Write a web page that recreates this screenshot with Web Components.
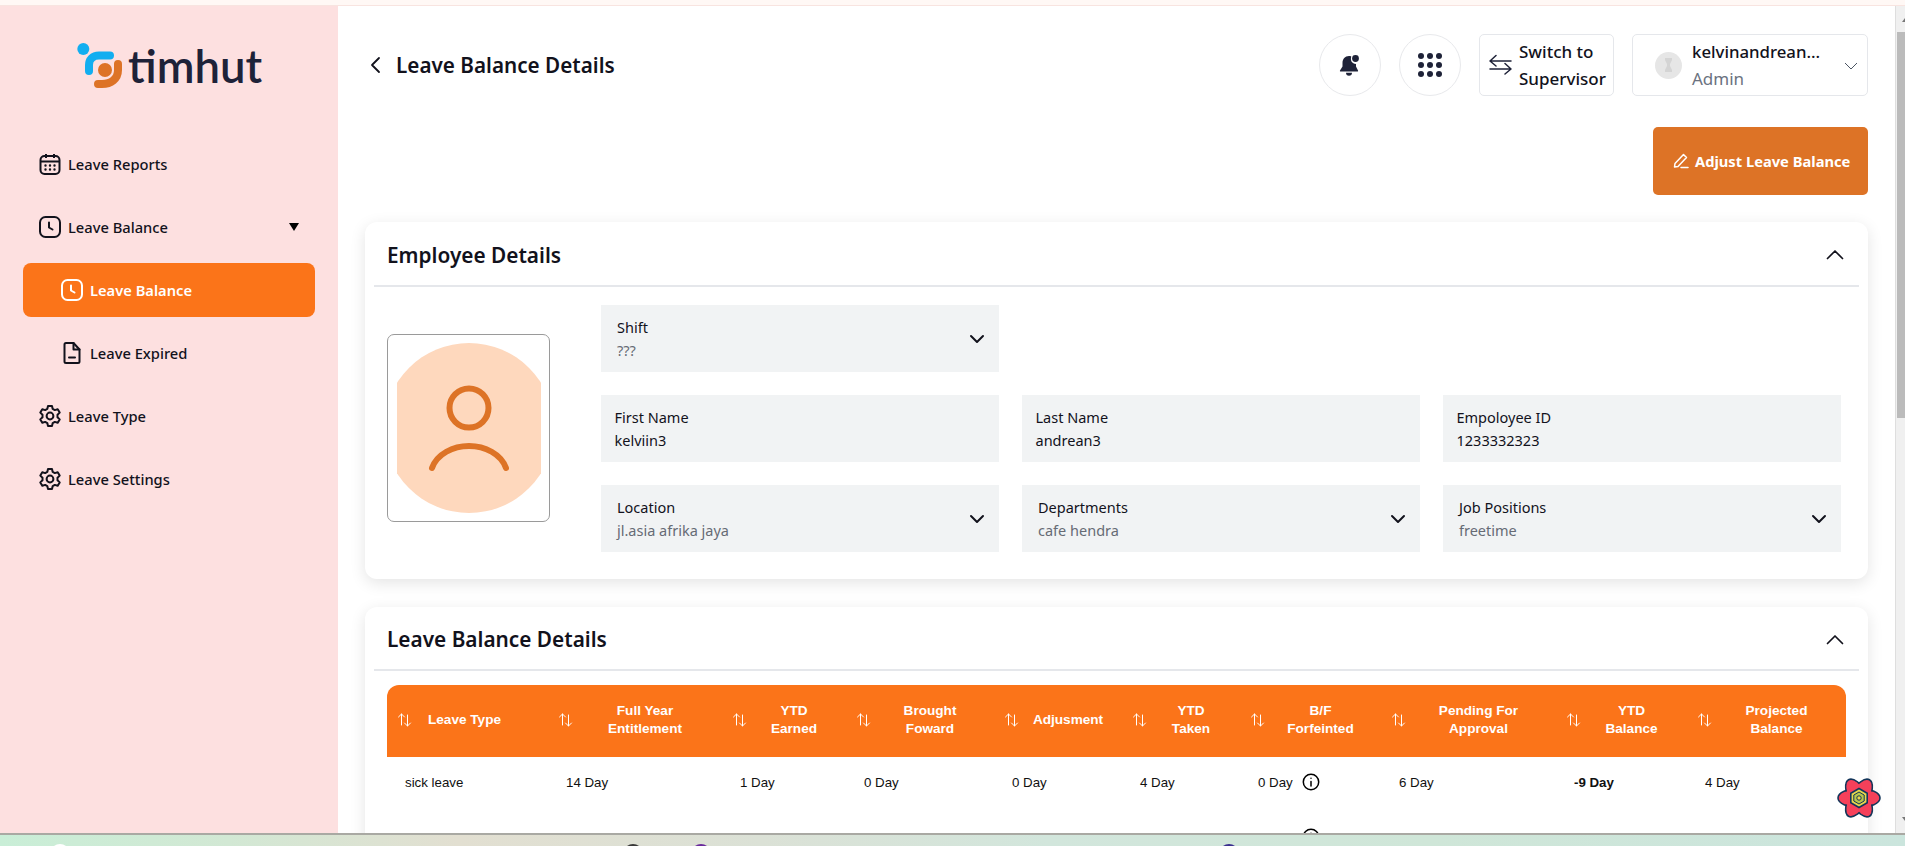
<!DOCTYPE html>
<html><head><meta charset="utf-8"><title>Leave Balance Details</title>
<style>
html,body{margin:0;padding:0;height:846px;overflow:hidden;background:#fff;font-family:"Noto Sans",sans-serif}
</style></head><body>
<app-shell>
  <side-bar slot="side">
    <nav-item icon="calendar">Leave Reports</nav-item>
    <nav-item icon="clock" caret>Leave Balance</nav-item>
    <nav-item icon="clock" sub active>Leave Balance</nav-item>
    <nav-item icon="file" sub>Leave Expired</nav-item>
    <nav-item icon="gear">Leave Type</nav-item>
    <nav-item icon="gear">Leave Settings</nav-item>
  </side-bar>
  <top-bar></top-bar>
  <adjust-row></adjust-row>
  <info-card heading="Employee Details"><employee-details></employee-details></info-card>
  <info-card heading="Leave Balance Details" second><leave-table></leave-table></info-card>
</app-shell>
<script>
const I={
calendar:'<rect x="2.500" y="4" width="19" height="18" rx="4"/><path d="M2.500 9.500h19M8 2v4M16 2v4"/><g stroke-width="2.400" stroke-linecap="round"><path d="M7.500 13.500h.01M12 13.500h.01M16.500 13.500h.01M7.500 17.500h.01M12 17.500h.01M16.500 17.500h.01"/></g>',
clock:'<rect x="2" y="2" width="20" height="20" rx="5.500"/><path d="M11 7.500V12.500l3.500 2" stroke-linecap="round" stroke-linejoin="round"/>',
file:'<path d="M4.500 3.500A1.500 1.500 0 0 1 6 2h7.500l6 6.500v12a1.500 1.500 0 0 1-1.500 1.500H6a1.500 1.500 0 0 1-1.500-1.500z" stroke-linejoin="round"/><path d="M13.500 2v6.500h6M9 16.500h6" stroke-linejoin="round" stroke-linecap="round"/>',
gear:'<circle cx="12" cy="12" r="3.400"/><path d="M10 2h4l.7 2.900 2.100 1.200 2.900-.9 2 3.400-2.200 2.100v2.600l2.200 2.100-2 3.400-2.900-.9-2.100 1.200L14 22h-4l-.7-2.900-2.100-1.200-2.900.9-2-3.400 2.200-2.100v-2.600L2.300 8.600l2-3.400 2.900.9 2.100-1.200z" stroke-linejoin="round"/>'
};
function def(name,css,html){
  customElements.define(name,class extends HTMLElement{
    connectedCallback(){
      if(this.shadowRoot)return;
      const r=this.attachShadow({mode:'open'});
      r.innerHTML='<style>'+css+'</style>'+(typeof html==='function'?html(this):html);
    }
  });
}
def('app-shell',`
:host{display:flex;flex-direction:column;width:1905px;height:846px;overflow:hidden;position:relative;background:#fff}
.strip{height:5px;background:#fff8f5;border-bottom:1px solid #f8e4e0;flex:none}
.mid{flex:1;display:flex;min-height:0}
main{flex:1;min-width:0;overflow:hidden;padding:28px 27px 0 27px;display:flex;flex-direction:column}
.bar{width:10px;box-sizing:border-box;flex:none;background:#f0f0f0;position:relative;border-left:1px solid #dedede}
.thumb{position:absolute;left:1px;right:0;top:26px;height:386px;background:#bbb}
.up,.dn{position:absolute;right:0;width:0;height:0;border-right:3px solid #777}
.up{top:12px;border-top:4px solid transparent;border-bottom:0}
.dn{top:811px;border-right:3px solid #777;border-bottom:4px solid transparent}
.task{height:11px;flex:none;border-top:2px solid #a9a9a3;position:relative;overflow:hidden;
background:linear-gradient(90deg,#c9eed7 0%,#d2e8d4 12%,#e2dfd1 24%,#dbe1d6 40%,#d2e6dc 55%,#cfe6d8 75%,#cbe5dd 100%)}
.task i{position:absolute;top:9px;width:20px;height:20px;border-radius:50%}
.react{position:absolute;left:1836px;top:775px;width:46px;height:46px}
`,`<div class="strip"></div>
<div class="mid"><slot name="side"></slot><main><slot></slot></main><div class="bar"><span class="up"></span><div class="thumb"></div><span class="dn"></span></div></div>
<div class="task"><i style="left:50px;background:#fff"></i><i style="left:623px;background:#3a3a3a"></i><i style="left:691px;background:#6a2a9c"></i><i style="left:1219px;background:#3b2f8f"></i></div>
<svg class="react" viewBox="-23 -23 46 46">
<g fill="#f5405a" stroke="#14365a" stroke-width="1.600"><ellipse rx="21" ry="9.500"/><ellipse rx="21" ry="9.500" transform="rotate(60)"/><ellipse rx="21" ry="9.500" transform="rotate(120)"/></g>
<g fill="#f5405a"><ellipse rx="19.500" ry="8.500" transform="rotate(60)"/><ellipse rx="19.500" ry="8.500"/></g>
<polygon points="0,-9.500 8.200,-4.750 8.200,4.750 0,9.500 -8.200,4.750 -8.200,-4.750" fill="#e9d84a" stroke="#14365a" stroke-width="1.600"/>
<polygon points="0,-6 5.200,-3 5.200,3 0,6 -5.200,3 -5.200,-3" fill="#b9c64a" stroke="#14365a" stroke-width="1"/>
<circle r="2.200" fill="#e9d84a" stroke="#14365a" stroke-width="1"/></svg>`);
def('side-bar',`
:host{display:flex;flex-direction:column;width:338px;flex:none;background:#fde0e0;box-sizing:border-box}
.logo{height:130.500px;display:flex;align-items:flex-start;padding:37px 0 0 77px;box-sizing:border-box;gap:5px}
.logo svg{flex:none}
.logo span{font:600 45.500px/46px Lato,sans-serif;color:#1e2238;margin-top:0}
nav{display:flex;flex-direction:column;gap:9px;padding:0 23px 0 23px}
`,`<div class="logo">
<svg width="46" height="46" viewBox="0 0 46 46" fill="none"><circle cx="6.300" cy="6" r="6" fill="#12aef0"/>
<path d="M33 12.500H22C15.500 12.500 12 17 12 22V28" stroke="#12aef0" stroke-width="8" stroke-linecap="round"/>
<circle cx="28" cy="27" r="7" fill="#dd7326"/>
<path d="M41 21V27C41 36 34 41 25 41H21" stroke="#dd7326" stroke-width="8" stroke-linecap="round"/></svg>
<span>timhut</span></div><nav><slot></slot></nav>`);
def('nav-item',`
:host{display:flex;align-items:center;height:54px;border-radius:8px;color:#12121c;font:500 14.700px "Noto Sans",sans-serif;padding-left:15px;position:relative}
:host([sub]){padding-left:37px}
:host([active]){background:#fb7419;color:#fff;font-weight:600}
svg{width:24px;height:24px;margin-right:6px;flex:none;fill:none;stroke:currentColor;stroke-width:2}
.caret{position:absolute;left:266px;top:23px;width:0;height:0;border-left:5.500px solid transparent;border-right:5.500px solid transparent;border-top:8px solid #000}
`,t=>`<svg viewBox="0 0 24 24">${I[t.getAttribute('icon')]}</svg><slot></slot>${t.hasAttribute('caret')?'<span class="caret"></span>':''}`);
def('top-bar',`
:host{display:flex;align-items:center;height:62px;flex:none;color:#12121c}
.back{width:12px;height:18px;margin:0 15px 0 4px;flex:none}
h1{font:600 20.700px "Noto Sans",sans-serif;margin:0;flex:1}
.right{display:flex;gap:18px;align-items:stretch;height:62px}
.circ{width:62px;height:62px;box-sizing:border-box;border:1px solid #e8e9ec;border-radius:50%;display:flex;align-items:center;justify-content:center}
.box{box-sizing:border-box;border:1px solid #e5e7eb;border-radius:5px;display:flex;align-items:center;font:500 17px/27px "Noto Sans",sans-serif}
.sw{width:135px;padding-left:9px;gap:7px}
.usr{width:236px;padding-left:22px;position:relative;font-size:16.800px}
.av{width:27px;height:27px;border-radius:50%;background:#e6e6e6;margin-right:10px;flex:none;display:flex;align-items:center;justify-content:center}
.usr small{display:block;font:400 17px/27px "Noto Sans",sans-serif;color:#6b7280}
.usr svg.c{position:absolute;right:9px;top:27px}
`,`<svg class="back" viewBox="0 0 12 18" fill="none" stroke="#12121c" stroke-width="1.800" stroke-linecap="round" stroke-linejoin="round"><path d="M10 2 3 9l7 7"/></svg>
<h1>Leave Balance Details</h1>
<div class="right">
<div class="circ"><svg width="22" height="22" viewBox="0 0 22 22" fill="#1e2238"><path d="M10 2C6 2 3.500 5 3.500 9v3.500L1 16.500c-.3.600 0 1 .7 1h16.600c.7 0 1-.4.700-1L17 12.500V10C13 9.500 11 6.500 12.300 2.400 11.600 2.100 10.800 2 10 2zM7 18.800a3 3 0 0 0 6 0z"/><circle cx="16.500" cy="4.500" r="3.400"/></svg></div>
<div class="circ"><svg width="24" height="24" viewBox="0 0 24 24" fill="#1e2238"><circle cx="3" cy="3" r="3"/><circle cx="12" cy="3" r="3"/><circle cx="21" cy="3" r="3"/><circle cx="3" cy="12" r="3"/><circle cx="12" cy="12" r="3"/><circle cx="21" cy="12" r="3"/><circle cx="3" cy="21" r="3"/><circle cx="12" cy="21" r="3"/><circle cx="21" cy="21" r="3"/></svg></div>
<div class="box sw"><svg width="23" height="22" viewBox="0 0 23 22" fill="none" stroke="#1e2238" stroke-width="1.500" stroke-linecap="round" stroke-linejoin="round"><path d="M1 7h21M7 1.500 1 7l6 5M22 15H1M16 9.500l6 5.500-6 5"/></svg><div>Switch to<br>Supervisor</div></div>
<div class="box usr"><div class="av"><svg width="9" height="16" viewBox="0 0 9 16" fill="#d4d4d4"><path d="M1 1h7v2L6 7v2l2 4v2H1v-2l2-4V7L1 3z"/></svg></div><div>kelvinandrean...<small>Admin</small></div>
<svg class="c" width="14" height="9" viewBox="0 0 14 9" fill="none" stroke="#4b5563" stroke-width="1"><path d="M1 1l6 6 6-6"/></svg></div>
</div>`);
def('adjust-row',`
:host{display:flex;justify-content:flex-end;margin:31px 0 27px;flex:none}
button{all:unset;box-sizing:border-box;width:215px;height:68px;background:#dd7326;border-radius:5px;color:#fff;font:700 14.700px "Noto Sans",sans-serif;display:flex;align-items:center;padding-left:20px;gap:6px;white-space:nowrap}
`,`<button><svg width="16" height="16" viewBox="0 0 16 16" fill="none" stroke="#fff" stroke-width="1.500" stroke-linecap="round" stroke-linejoin="round"><path d="M1.500 14 2 10.500 10.500 1.500l3 3L5 13.500zM8 14.500h7"/></svg>Adjust Leave Balance</button>`);
def('info-card',`
:host{display:block;flex:none;background:#fff;border-radius:12px;box-shadow:0 4px 16px rgba(0,0,0,.11);padding:0 9px 27px}
:host([second]){margin-top:28px}
.h{height:61px;padding:2px 13px 0;border-bottom:2px solid #e5e7eb;display:flex;align-items:center;justify-content:space-between}
h2{margin:0;font:600 20.800px "Noto Sans",sans-serif;color:#12121c}
svg{margin-right:2px}
:host([second]) .h{height:60px;padding-top:2px}
`,t=>`<div class="h"><h2>${t.getAttribute('heading')}</h2><svg width="18" height="11" viewBox="0 0 18 11" fill="none" stroke="#12121c" stroke-width="1.700" stroke-linecap="round" stroke-linejoin="round"><path d="M1.500 9.500 9 2l7.500 7.500"/></svg></div><slot></slot>`);
def('employee-details',`
:host{display:flex;padding:18px 18px 0 13px;align-items:center;gap:51px}
.ph{width:163px;height:188px;box-sizing:border-box;border:1px solid #9a9a9a;border-radius:7px;display:flex;align-items:center;justify-content:center;flex:none;margin-bottom:2px}
.g{display:grid;grid-template-columns:repeat(3,398px);grid-auto-rows:67px;gap:23px}
.sp{grid-column:span 2}
`,`<div class="ph"><svg width="144" height="170" viewBox="0 0 144 170" fill="none"><circle cx="72" cy="85" r="85" fill="#fed8bd"/><circle cx="72" cy="65" r="19.500" stroke="#dd7326" stroke-width="6"/><path d="M35 125C40 111 56 103 72 103s32 8 37 22" stroke="#dd7326" stroke-width="6" stroke-linecap="round"/></svg></div>
<div class="g">
<field-box select label="Shift" value="???"></field-box><div class="sp"></div>
<field-box label="First Name" value="kelviin3"></field-box><field-box label="Last Name" value="andrean3"></field-box><field-box label="Empoloyee ID" value="1233332323"></field-box>
<field-box select label="Location" value="jl.asia afrika jaya"></field-box><field-box select label="Departments" value="cafe hendra"></field-box><field-box select label="Job Positions" value="freetime"></field-box>
</div>`);
def('field-box',`
:host{display:flex;flex-direction:column;justify-content:center;background:#f1f3f4;padding:0 13.500px;box-sizing:border-box;position:relative;color:#12121c;font:400 14.500px/23px "Noto Sans",sans-serif}
:host([select]){padding-left:16px}
.v{font-size:14.500px}
:host([select]) .v{color:#666b75}
svg{position:absolute;right:14px;top:29px}
`,t=>`<div>${t.getAttribute('label')}</div><div class="v">${t.getAttribute('value')}</div>${t.hasAttribute('select')?'<svg width="16" height="10" viewBox="0 0 16 10" fill="none" stroke="#12121c" stroke-width="2" stroke-linecap="round" stroke-linejoin="round"><path d="M2 2l6 6 6-6"/></svg>':''}`);
const sort='<svg class="s" width="15" height="16" viewBox="0 0 15 16" fill="none" stroke="#fff" stroke-width="1" stroke-linecap="round" stroke-linejoin="round"><path d="M4.500 13V2M1.500 5l3-3 3 3M10.500 3v11M7.500 11l3 3 3-3"/></svg>';
const heads=['Leave Type','Full Year<br>Entitlement','YTD<br>Earned','Brought<br>Foward','Adjusment','YTD<br>Taken','B/F<br>Forfeinted','Pending For<br>Approval','YTD<br>Balance','Projected<br>Balance'];
const r1=['sick leave','14 Day','1 Day','0 Day','0 Day','4 Day','0 Day','6 Day','-9 Day','4 Day'];
const r2=['','15 Day','15 Day','0 Day','0 Day','0 Day','0 Day','0 Day','15 Day','15 Day'];
const info='<svg class="i" width="18" height="18" viewBox="0 0 18 18" fill="none" stroke="#000" stroke-width="1.500" stroke-linecap="round"><circle cx="9" cy="9" r="7.700"/><path d="M9 8.500v4.500M9 5.200v.1"/></svg>';
const cell=(t,i)=>`<div class="c${i==8?' b':''}">${t}${i==6?info:''}</div>`;
def('leave-table',`
:host{display:block;margin:14px 0 0 13px;width:1459px;font:13.300px "Liberation Sans",Arial,sans-serif;color:#111}
.r{display:grid;grid-template-columns:161px 174px 124px 148px 128px 118px 141px 175px 131px 159px}
.hd{background:#fb7419;border-radius:12px 12px 0 0;height:72px;color:#fff;font-weight:700;font-size:13.600px;line-height:18px}
.th{display:flex;align-items:center;padding:0 0 2px 10px}
.th div{flex:1;text-align:center;padding-right:5px}
.th:first-child div{flex:none;margin-left:16px;padding:0}
.d{height:55px}
.c{padding:0 0 5px 18px;display:flex;align-items:center;gap:9px}
.b{font-weight:700}
`,`<div class="r hd">${heads.map(h=>`<div class="th">${sort}<div>${h}</div></div>`).join('')}</div>
<div class="r d">${r1.map(cell).join('')}</div><div class="r d">${r2.map(cell).join('')}</div>`);
</script>
</body></html>
